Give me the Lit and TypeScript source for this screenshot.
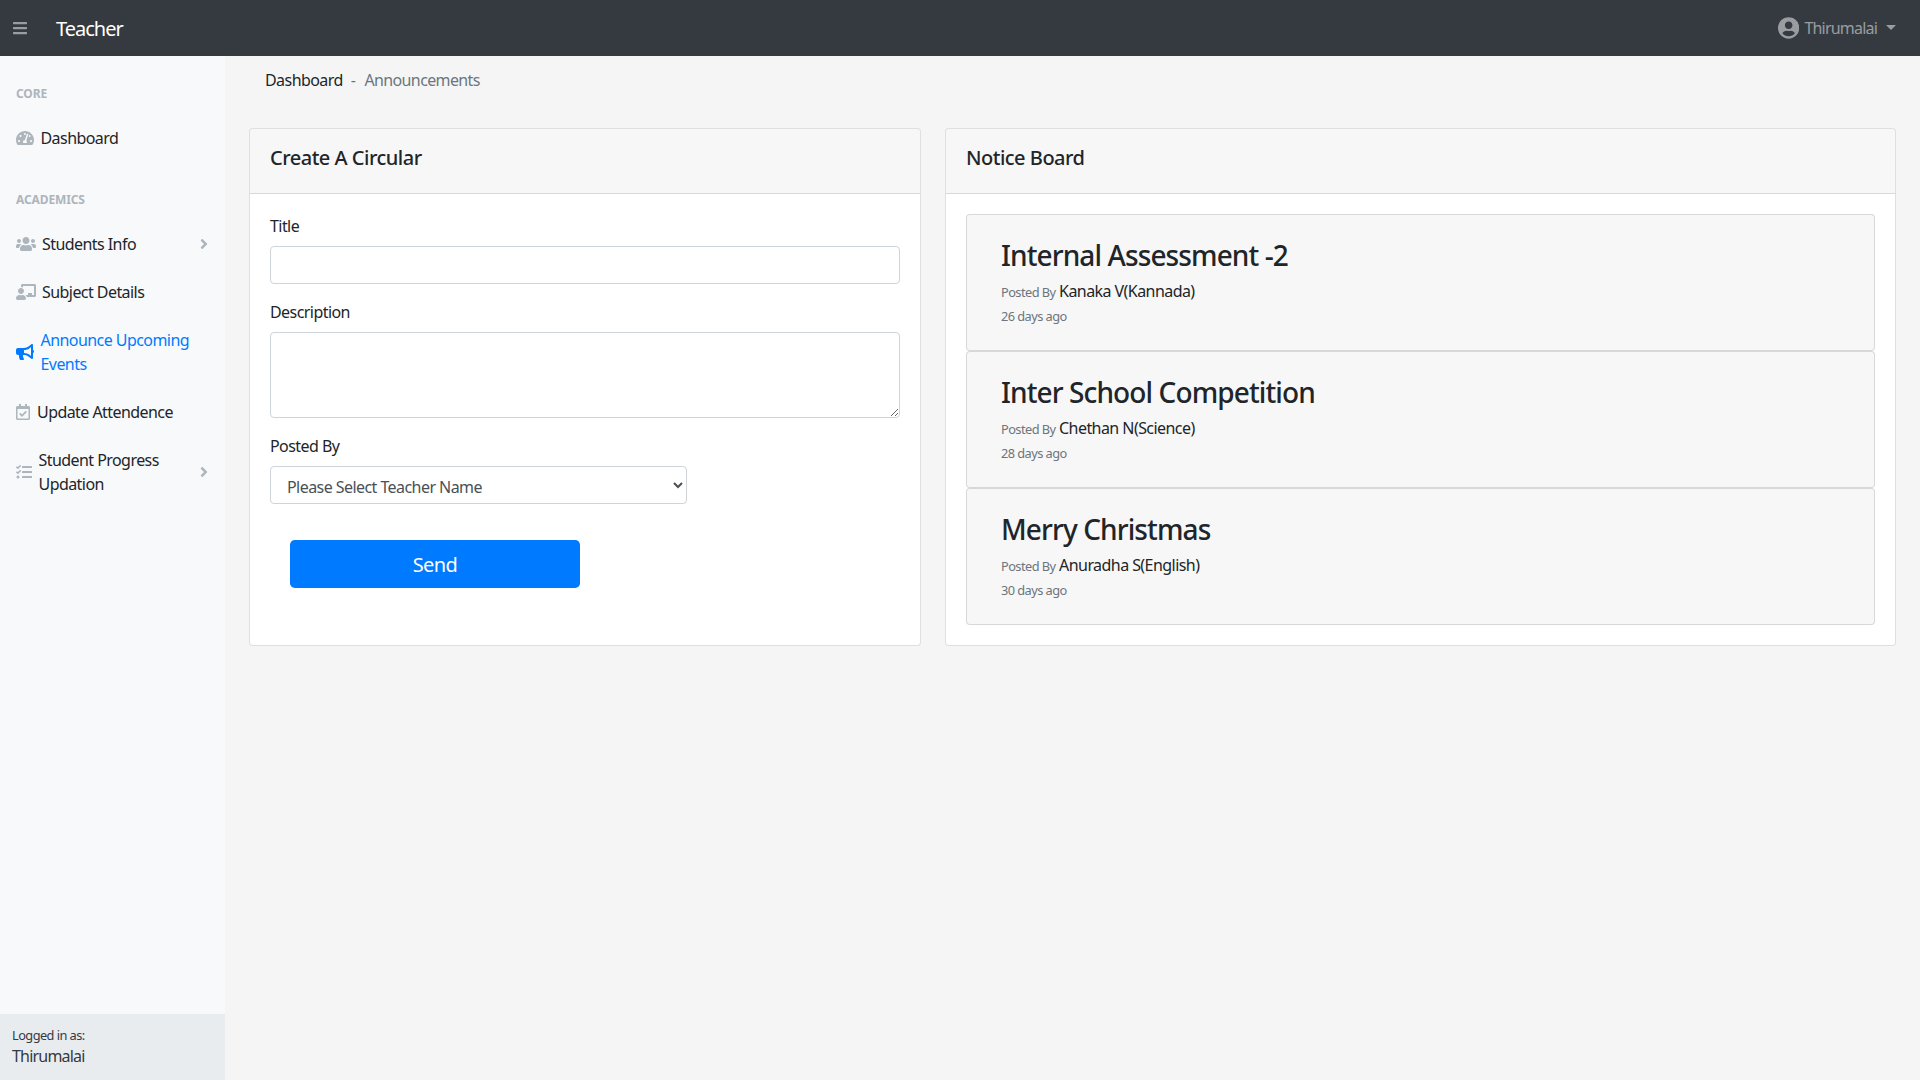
import { LitElement, html, css, svg } from "lit";
import { customElement } from "lit/decorators.js";

const ICONS: Record<string, [number, number, string]> = {
  bars: [448, 512, "M16 132h416c8.837 0 16-7.163 16-16V76c0-8.837-7.163-16-16-16H16C7.163 60 0 67.163 0 76v40c0 8.837 7.163 16 16 16zm0 160h416c8.837 0 16-7.163 16-16v-40c0-8.837-7.163-16-16-16H16c-8.837 0-16 7.163-16 16v40c0 8.837 7.163 16 16 16zm0 160h416c8.837 0 16-7.163 16-16v-40c0-8.837-7.163-16-16-16H16c-8.837 0-16 7.163-16 16v40c0 8.837 7.163 16 16 16z"],
  gauge: [576, 512, "M288 32C128.94 32 0 160.94 0 320c0 52.8 14.25 102.26 39.06 144.8 5.61 9.62 16.3 15.2 27.44 15.2h443c11.14 0 21.83-5.58 27.44-15.2C561.75 422.26 576 372.8 576 320c0-159.06-128.94-288-288-288zm0 64c14.71 0 26.58 10.13 30.32 23.65-1.11 2.26-2.64 4.23-3.45 6.67l-9.22 27.67c-5.13 3.49-10.97 6.01-17.64 6.01-17.67 0-32-14.33-32-32S270.33 96 288 96zM96 384c-17.67 0-32-14.33-32-32s14.33-32 32-32 32 14.33 32 32-14.33 32-32 32zm48-160c-17.67 0-32-14.33-32-32s14.33-32 32-32 32 14.33 32 32-14.33 32-32 32zm246.77-72.41l-61.33 184C343.13 347.33 352 364.54 352 384c0 11.72-3.38 22.55-8.88 32H232.88c-5.5-9.45-8.88-20.28-8.88-32 0-33.94 26.5-61.43 59.9-63.59l61.34-184.01c4.17-12.56 17.73-19.45 30.36-15.17 12.57 4.19 19.35 17.79 15.17 30.36zm14.66 57.2l15.52-46.55c3.47-1.29 7.13-2.23 11.05-2.23 17.67 0 32 14.33 32 32s-14.33 32-32 32c-11.38-.01-20.89-6.28-26.57-15.22zM480 384c-17.67 0-32-14.33-32-32s14.33-32 32-32 32 14.33 32 32-14.33 32-32 32z"],
  users: [640, 512, "M96 224c35.3 0 64-28.7 64-64s-28.7-64-64-64-64 28.7-64 64 28.7 64 64 64zm448 0c35.3 0 64-28.7 64-64s-28.7-64-64-64-64 28.7-64 64 28.7 64 64 64zm32 32h-64c-17.6 0-33.5 7.1-45.1 18.6 40.3 22.1 68.9 62 75.1 109.4h66c17.7 0 32-14.3 32-32v-32c0-35.3-28.7-64-64-64zm-256 0c61.9 0 112-50.1 112-112S381.9 32 320 32 208 82.1 208 144s50.1 112 112 112zm76.8 32h-8.3c-20.8 10-43.9 16-68.5 16s-47.6-6-68.5-16h-8.3C179.6 288 128 339.6 128 403.2V432c0 26.5 21.5 48 48 48h288c26.5 0 48-21.5 48-48v-28.8c0-63.6-51.6-115.2-115.2-115.2zm-223.7-13.4C161.5 263.1 145.6 256 128 256H64c-35.3 0-64 28.7-64 64v32c0 17.7 14.3 32 32 32h65.9c6.3-47.4 34.9-87.3 75.2-109.4z"],
  board: [640, 512, "M208 352c-2.39 0-4.78.35-7.06 1.09C187.98 357.3 174.35 360 160 360c-14.35 0-27.98-2.7-40.95-6.91-2.28-.74-4.66-1.09-7.05-1.09C49.94 352-.33 402.48 0 464.62.14 490.88 21.73 512 48 512h224c26.27 0 47.86-21.12 48-47.38.33-62.14-49.94-112.62-112-112.62zm-48-32c53.02 0 96-42.98 96-96s-42.98-96-96-96-96 42.98-96 96 42.98 96 96 96zM592 0H208c-26.47 0-48 22.25-48 49.59V96c23.42 0 45.1 6.78 64 17.8V64h352v288h-64v-64H384v64h-76.24c19.1 16.69 33.12 38.73 39.69 64H592c26.47 0 48-22.25 48-49.59V49.59C640 22.25 618.47 0 592 0z"],
  horn: [576, 512, "M576 240c0-23.63-12.95-44.04-32-55.12V32.01C544 23.26 537.02 0 512 0c-7.12 0-14.19 2.38-19.98 7.02l-85.03 68.03C364.28 109.19 310.66 128 256 128H64c-35.35 0-64 28.65-64 64v96c0 35.35 28.65 64 64 64h33.7c-1.39 10.48-2.18 21.14-2.18 32 0 39.77 9.26 77.35 25.56 110.94 5.19 10.69 16.52 17.06 28.4 17.06h74.28c26.05 0 41.69-29.84 25.9-50.56-16.4-21.52-26.15-48.36-26.15-77.44 0-11.11 1.62-21.79 4.41-32H256c54.66 0 108.28 18.81 150.98 52.95l85.03 68.03a32.023 32.023 0 0 0 19.98 7.02c24.92 0 32-22.78 32-32V295.13C563.05 284.04 576 263.63 576 240zm-96 141.42l-33.05-26.44C392.95 311.78 325.12 288 256 288v-96c69.12 0 136.95-23.78 190.95-66.98L480 98.58v282.84z"],
  cal: [448, 512, "M400 64h-48V12c0-6.627-5.373-12-12-12h-40c-6.627 0-12 5.373-12 12v52H160V12c0-6.627-5.373-12-12-12h-40c-6.627 0-12 5.373-12 12v52H48C21.49 64 0 85.49 0 112v352c0 26.51 21.49 48 48 48h352c26.51 0 48-21.49 48-48V112c0-26.51-21.49-48-48-48zm-6 400H54a6 6 0 0 1-6-6V160h352v298a6 6 0 0 1-6 6zm-52.849-200.65L198.842 404.519c-4.705 4.667-12.303 4.637-16.971-.068l-75.091-75.699c-4.667-4.705-4.637-12.303.068-16.971l22.719-22.536c4.705-4.667 12.303-4.637 16.97.069l44.104 44.461 111.072-110.181c4.705-4.667 12.303-4.637 16.971.068l22.536 22.718c4.667 4.705 4.636 12.303-.069 16.97z"],
  tasks: [512, 512, "M139.61 35.5a12 12 0 0 0-17 0L58.93 98.81l-22.7-22.12a12 12 0 0 0-17 0L3.53 92.41a12 12 0 0 0 0 17l47.59 47.4a12.78 12.78 0 0 0 17.61 0l15.59-15.62L156.52 69a12.09 12.09 0 0 0 .09-17zm0 159.19a12 12 0 0 0-17 0l-63.68 63.72-22.7-22.1a12 12 0 0 0-17 0L3.53 252a12 12 0 0 0 0 17L51 316.5a12.77 12.77 0 0 0 17.6 0l15.7-15.69 72.2-72.22a12 12 0 0 0 .09-16.9zM64 368c-26.49 0-48.59 21.5-48.59 48S37.53 464 64 464a48 48 0 0 0 0-96zm432 16H208a16 16 0 0 0-16 16v32a16 16 0 0 0 16 16h288a16 16 0 0 0 16-16v-32a16 16 0 0 0-16-16zm0-320H208a16 16 0 0 0-16 16v32a16 16 0 0 0 16 16h288a16 16 0 0 0 16-16V80a16 16 0 0 0-16-16zm0 160H208a16 16 0 0 0-16 16v32a16 16 0 0 0 16 16h288a16 16 0 0 0 16-16v-32a16 16 0 0 0-16-16z"],
  angle: [256, 512, "M224.3 273l-136 136c-9.4 9.4-24.6 9.4-33.9 0l-22.6-22.6c-9.4-9.4-9.4-24.6 0-33.9l96.4-96.4-96.4-96.4c-9.4-9.4-9.4-24.6 0-33.9L54.3 103c9.4-9.4 24.6-9.4 33.9 0l136 136c9.5 9.4 9.5 24.6.1 34z"],
  user: [496, 512, "M248 8C111 8 0 119 0 256s111 248 248 248 248-111 248-248S385 8 248 8zm0 96c48.6 0 88 39.4 88 88s-39.4 88-88 88-88-39.4-88-88 39.4-88 88-88zm0 344c-58.7 0-111.3-26.6-146.5-68.2 18.8-35.4 55.6-59.8 98.5-59.8 2.4 0 4.8.4 7.1 1.1 13 4.2 26.6 6.9 40.9 6.9 14.3 0 28-2.7 40.9-6.9 2.3-.7 4.7-1.1 7.1-1.1 42.9 0 79.7 24.4 98.5 59.8C359.3 421.4 306.7 448 248 448z"],
};

const icon = (name: string, size = 16) => {
  const [w, h, d] = ICONS[name];
  return html`<svg class="ic" width=${(w / h) * size} height=${size} viewBox="0 0 ${w} ${h}" fill="currentColor">${svg`<path d=${d}></path>`}</svg>`;
};

const NOTICES = [
  { t: "Internal Assessment -2", by: "Kanaka V(Kannada)", ago: "26 days ago" },
  { t: "Inter School Competition", by: "Chethan N(Science)", ago: "28 days ago" },
  { t: "Merry Christmas", by: "Anuradha S(English)", ago: "30 days ago" },
];

@customElement("app-root")
export class AppRoot extends LitElement {
  static styles = css`
    :host {
      display: block;
      height: 100vh;
      overflow: hidden;
      font-family: "Noto Sans", sans-serif;
      font-size: 16px;
      line-height: 24px;
      letter-spacing: -0.56px;
      color: #212529;
      background: #f5f5f5;
    }
    * { box-sizing: border-box; }
    .ic { display: block; flex: none; }
    .top {
      height: 56px;
      background: #343a40;
      display: flex;
      align-items: center;
      color: rgba(255, 255, 255, 0.5);
    }
    .burger { margin-left: 13px; width: 43px; }
    .brand { font-size: 20px; color: #fff; margin-top: 1px; letter-spacing: -1px; }
    .user { margin-left: auto; margin-right: 24px; display: flex; align-items: center; }
    .user .name { margin-left: 5px; letter-spacing: -0.8px; }
    .caret {
      margin-left: 9px;
      margin-top: -2px;
      border-top: 5px solid currentColor;
      border-left: 5px solid transparent;
      border-right: 5px solid transparent;
    }
    .shell { display: flex; height: calc(100vh - 56px); }
    .side {
      width: 225px;
      flex: none;
      background: #f8f9fa;
      display: flex;
      flex-direction: column;
    }
    .nav { flex: 1; }
    .head {
      padding: 29px 16px 11px;
      font-size: 12px;
      line-height: 18px;
      font-weight: 700;
      letter-spacing: -0.12px;
      text-transform: uppercase;
      color: #adb5bd;
    }
    .link {
      display: flex;
      align-items: center;
      padding: 12px 16px;
      color: #212529;
    }
    .link .ic:first-child { color: #adb5bd; }
    .link.active, .link.active .ic:first-child { color: #007bff; }
    .link .label { flex: 1; margin-left: var(--gap, 8px); }
    .link .arrow { color: #adb5bd; margin-left: 8px; margin-right: 1px; }
    .foot {
      background: #e9ecef;
      padding: 12px;
      color: #343a40;
    }
    .foot .small { font-size: 12.8px; line-height: 19.2px; }
    .foot .who { line-height: 24px; margin-top: -1px; letter-spacing: -0.8px; }
    .main { flex: 1; padding: 0 24px; min-width: 0; }
    .crumb { padding: 12px 16px; margin-bottom: 24px; display: flex; color: #6c757d; }
    .crumb .first { color: #212529; }
    .crumb .sep { padding: 0 9px 0 8px; }
    .crumb .last { letter-spacing: -0.62px; }
    .grid { display: grid; grid-template-columns: 672px 951px; gap: 24px; }
    .card {
      background: #fff;
      border: 1px solid rgba(0, 0, 0, 0.125);
      border-radius: 4px;
      display: flex;
      flex-direction: column;
    }
    .card-head {
      padding: 17px 20px 23px;
      background: rgba(0, 0, 0, 0.03);
      border-bottom: 1px solid rgba(0, 0, 0, 0.125);
      font-size: 20px;
      line-height: 24px;
      font-weight: 500;
      letter-spacing: -0.5px;
      border-radius: 3px 3px 0 0;
    }
    .card-body { padding: 20px; }
    label.f { display: block; margin-bottom: 8px; }
    input, textarea, select {
      display: block;
      width: 100%;
      border: 1px solid #ced4da;
      border-radius: 4px;
      background: #fff;
      font: inherit;
      letter-spacing: inherit;
      color: #495057;
      padding: 6px 12px;
      margin: 0 0 16px;
    }
    input, select { height: 38px; }
    textarea { height: 86px; resize: vertical; }
    select { width: 417px; margin-bottom: 0; padding-top: 8px; padding-bottom: 6px; }
    .send {
      display: block;
      width: 290px;
      height: 48px;
      margin: 36px 0 36px 20px;
      padding: 2px 0 0;
      background: #007bff;
      border: 0;
      border-radius: 4.8px;
      color: #fff;
      font: inherit;
      font-size: 20px;
      letter-spacing: inherit;
    }
    .notice {
      background: #f7f7f7;
      border: 1px solid rgba(0, 0, 0, 0.125);
      border-radius: 4px;
      padding: 24px 34px 21px;
      height: 137px;
    }
    .notice h3 {
      margin: 0 0 6px;
      font-size: 28px;
      line-height: 33.6px;
      font-weight: 500;
      letter-spacing: -0.89px;
    }
    .muted { color: #6c757d; font-size: 12.8px; }
  `;

  private link(ic: string, text: string, gap: number, opts: { active?: boolean; arrow?: boolean } = {}) {
    return html`<div class="link ${opts.active ? "active" : ""}" style="--gap:${gap}px">
      ${icon(ic)}
      <span class="label">${text}</span>
      ${opts.arrow ? html`<span class="arrow">${icon("angle")}</span>` : ""}
    </div>`;
  }

  render() {
    return html`
      <div class="top">
        <div class="burger">${icon("bars")}</div>
        <div class="brand">Teacher</div>
        <div class="user">
          ${icon("user", 22)}
          <span class="name">Thirumalai</span>
          <span class="caret"></span>
        </div>
      </div>
      <div class="shell">
        <aside class="side">
          <div class="nav">
            <div class="head">Core</div>
            ${this.link("gauge", "Dashboard", 6.5)}
            <div class="head">Academics</div>
            ${this.link("users", "Students Info", 6, { arrow: true })}
            ${this.link("board", "Subject Details", 6)}
            ${this.link("horn", "Announce Upcoming Events", 6.5, { active: true })}
            ${this.link("cal", "Update Attendence", 7)}
            ${this.link("tasks", "Student Progress Updation", 6.5, { arrow: true })}
          </div>
          <div class="foot">
            <div class="small">Logged in as:</div>
            <div class="who">Thirumalai</div>
          </div>
        </aside>
        <main class="main">
          <div class="crumb">
            <span class="first">Dashboard</span><span class="sep">-</span><span class="last">Announcements</span>
          </div>
          <div class="grid">
            <section class="card">
              <div class="card-head">Create A Circular</div>
              <div class="card-body">
                <label class="f">Title</label>
                <input type="text" />
                <label class="f">Description</label>
                <textarea></textarea>
                <label class="f">Posted By</label>
                <select><option>Please Select Teacher Name</option></select>
                <button class="send">Send</button>
              </div>
            </section>
            <section class="card">
              <div class="card-head">Notice Board</div>
              <div class="card-body">
                ${NOTICES.map(
                  (n) => html`<div class="notice">
                    <h3>${n.t}</h3>
                    <div><span class="muted">Posted By</span> ${n.by}</div>
                    <div class="muted">${n.ago}</div>
                  </div>`
                )}
              </div>
            </section>
          </div>
        </main>
      </div>
    `;
  }
}
